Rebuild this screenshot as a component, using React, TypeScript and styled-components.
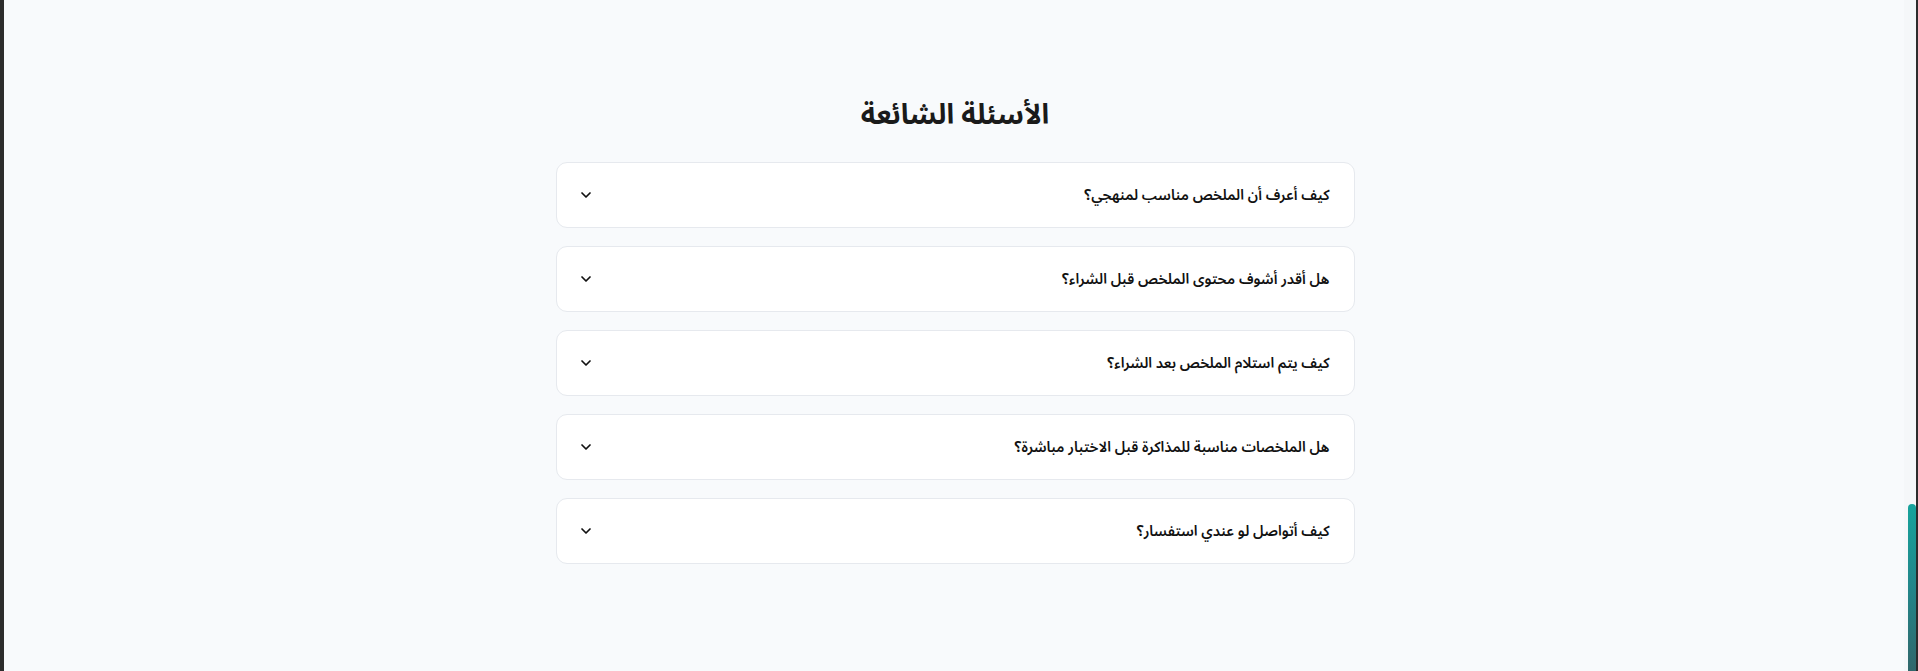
import styled, { createGlobalStyle } from 'styled-components';
import { ChevronDown } from 'lucide-react';

const questions = [
  'كيف أعرف أن الملخص مناسب لمنهجي؟',
  'هل أقدر أشوف محتوى الملخص قبل الشراء؟',
  'كيف يتم استلام الملخص بعد الشراء؟',
  'هل الملخصات مناسبة للمذاكرة قبل الاختبار مباشرة؟',
  'كيف أتواصل لو عندي استفسار؟',
];

const GlobalStyle = createGlobalStyle`
  html, body {
    margin: 0;
    padding: 0;
    height: 100%;
    overflow: hidden;
  }
  body {
    background: #f8fafc;
    font-family: "Noto Sans Arabic", "Noto Sans", "DejaVu Sans", sans-serif;
  }
`;

const App = (): JSX.Element => {
  return (
    <>
      <GlobalStyle />
      <Page>
        <LeftEdge />
        <Main>
          <FaqSection dir="rtl">
            <Title>الأسئلة الشائعة</Title>
            <List>
              {questions.map((q) => (
                <Item key={q}>
                  <Question>{q}</Question>
                  <ChevronDown size={16} strokeWidth={2.6} color="#111" />
                </Item>
              ))}
            </List>
          </FaqSection>
        </Main>
        <ScrollTrack>
          <ScrollThumb />
        </ScrollTrack>
        <RightEdge />
      </Page>
    </>
  );
};

const Page = styled.div`
  display: flex;
  height: 671px;
  width: 100%;
`;
const LeftEdge = styled.div`
  width: 4px;
  flex-shrink: 0;
  background: #2c2c2c;
`;
const Main = styled.main`
  flex: 1;
  display: flex;
  justify-content: center;
  padding-left: 2px;
`;
const FaqSection = styled.section`
  width: 799px;
  padding-top: 96px;
  display: flex;
  flex-direction: column;
  align-items: center;
`;
const Title = styled.h2`
  margin: 0 0 26px;
  font-size: 28px;
  line-height: 40px;
  font-weight: 700;
  color: #1a1a1a;
`;
const List = styled.div`
  width: 100%;
  display: flex;
  flex-direction: column;
  gap: 18px;
`;
const Item = styled.div`
  box-sizing: border-box;
  height: 66px;
  display: flex;
  align-items: center;
  justify-content: space-between;
  padding: 0 24px 0 21px;
  background: #ffffff;
  border: 1px solid #e6e9ee;
  border-radius: 11px;
`;
const Question = styled.span`
  font-size: 14.5px;
  font-weight: 600;
  color: #111111;
`;
const ScrollTrack = styled.div`
  width: 12px;
  flex-shrink: 0;
  background: #f5f7f9;
  display: flex;
  flex-direction: column;
  justify-content: flex-end;
  align-items: flex-end;
`;
const ScrollThumb = styled.div`
  width: 8px;
  height: 167px;
  border-radius: 4px 4px 0 0;
  background: linear-gradient(180deg, #17a39c 0%, #22868a 50%, #31676b 100%);
`;
const RightEdge = styled.div`
  width: 2px;
  flex-shrink: 0;
  background: #2c2c2c;
`;

export default App;
